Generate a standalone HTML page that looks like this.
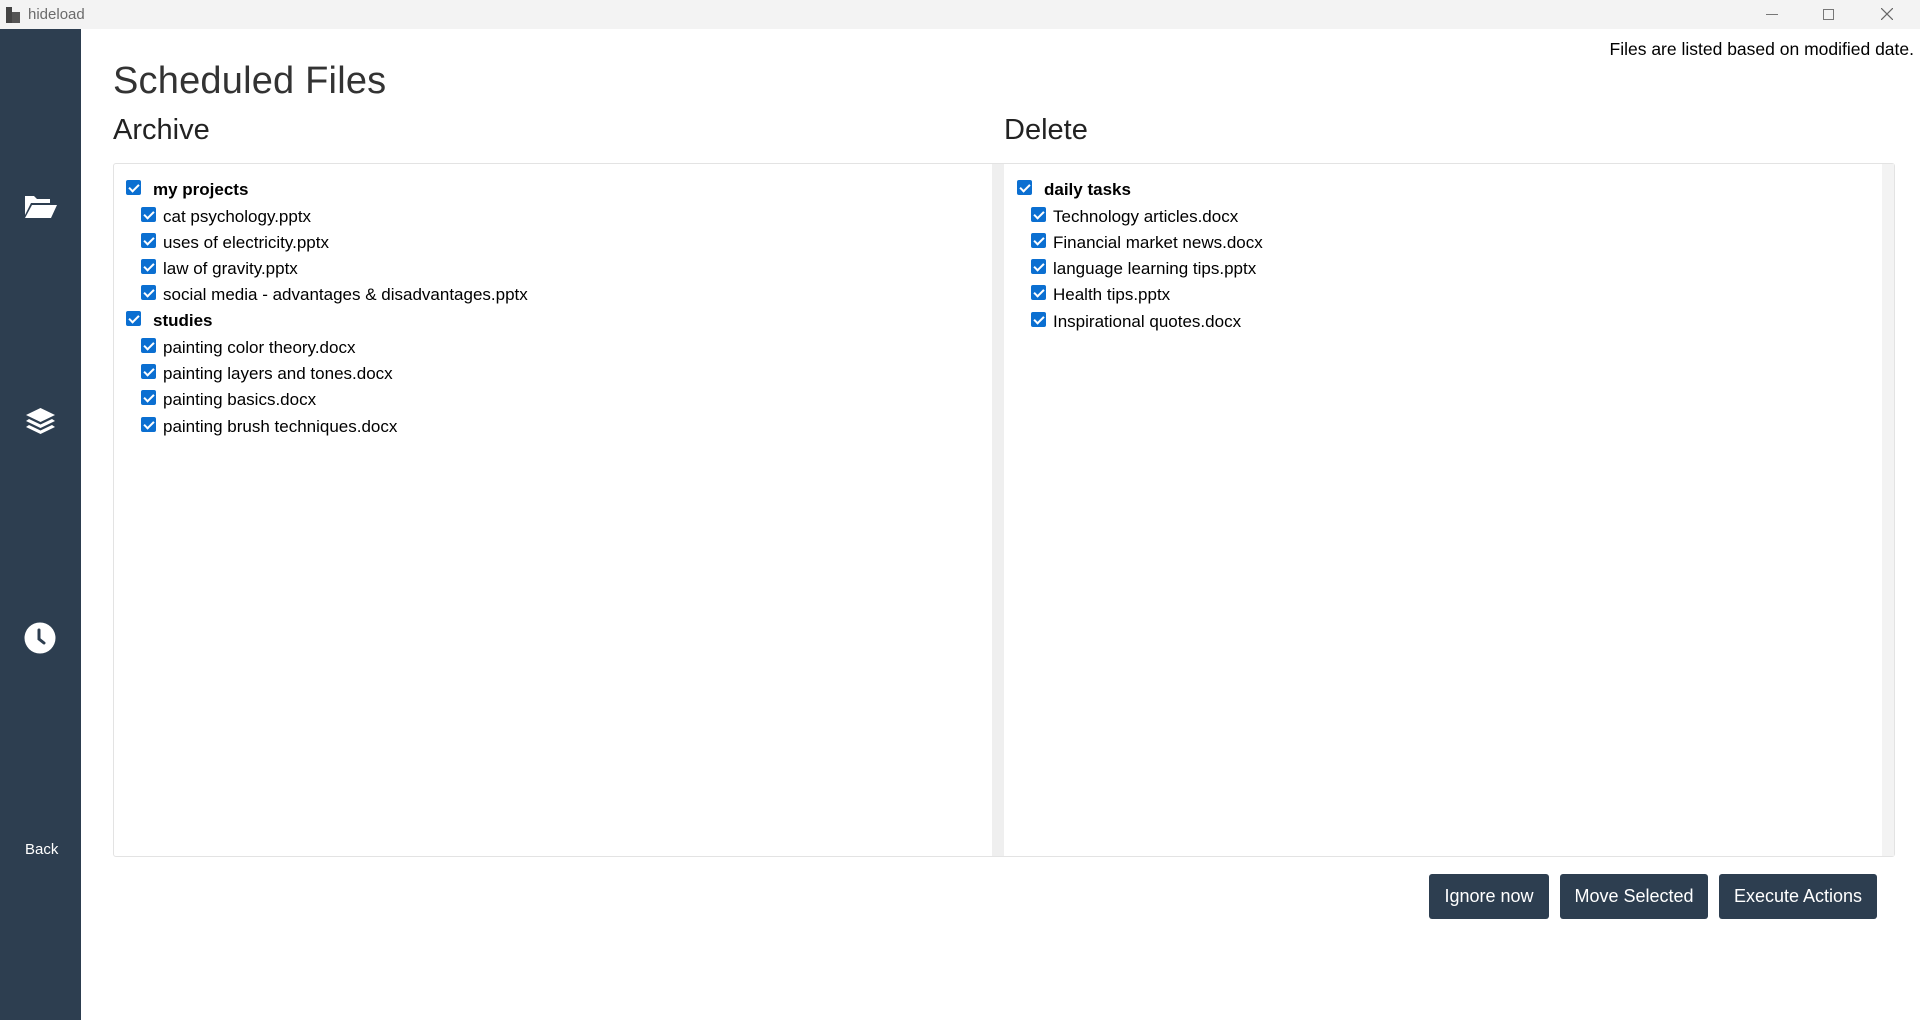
<!DOCTYPE html>
<html><head><meta charset="utf-8"><style>
*{margin:0;padding:0;box-sizing:border-box}
body{width:1920px;height:1020px;overflow:hidden;background:#fff;font-family:"Liberation Sans",sans-serif;position:relative;color:#000}
.tb{position:absolute;left:0;top:0;width:1920px;height:29px;background:#f3f3f3}
.tb .t{position:absolute;left:28px;top:6px;font-size:15px;color:#6b6b6b}
.side{position:absolute;left:0;top:29px;width:81px;height:991px;background:#2d3e50}
.abs{position:absolute}
.h1{left:113px;top:60px;font-size:38px;font-weight:normal;color:#333;letter-spacing:0.2px}
.h2{top:114px;font-size:29px;color:#222}
.panel{position:absolute;left:113px;top:163px;width:1782px;height:694px;border:1px solid #e3e3e3;border-radius:3px}
.div{position:absolute;left:992px;top:164px;width:12px;height:692px;background:#efefef}
.sb{position:absolute;left:1882px;top:164px;width:12px;height:692px;background:#f3f3f3}
.row{position:absolute;height:26px;display:flex;align-items:center;font-size:17px;white-space:nowrap}
.cb{width:15px;height:15px;background:#0b6fd1;border-radius:2px;margin-right:7px;position:relative;flex:none;margin-top:-5px}
.cb:after{content:"";position:absolute;left:5px;top:2px;width:4px;height:8px;border:solid #fff;border-width:0 2px 2px 0;transform:rotate(45deg)}
.p{font-weight:bold}
.p .cb{margin-right:12px}
.btn{position:absolute;top:874px;height:45px;background:#2d3e50;color:#fff;border-radius:3px;font-size:18px;display:flex;align-items:center;justify-content:center}
</style></head><body>
<div class="tb"><svg class="abs" style="left:6px;top:7px" width="14" height="16"><rect x="0" y="0" width="6" height="16" fill="#444"/><rect x="6" y="5" width="8" height="11" fill="#555"/></svg><span class="t">hideload</span>
<span class="abs" style="left:1766px;top:14px;width:12px;height:1px;background:#777"></span>
<span class="abs" style="left:1823px;top:9px;width:11px;height:11px;border:1px solid #777"></span>
<svg class="abs" style="left:1881px;top:8px" width="12" height="12"><path d="M0 0L12 12M12 0L0 12" stroke="#666" stroke-width="1.2"/></svg></div>
<div class="side">
<svg class="abs" style="left:24px;top:164px" width="33" height="26" viewBox="0 0 33 26"><path d="M1 3h9l3 3h13v4H7L1 22z" fill="#fff"/><path d="M8 12h25l-6 13H1z" fill="#fff"/></svg>
<svg class="abs" style="left:25px;top:378px" width="31" height="30" viewBox="0 0 31 30"><path d="M15.5 1L30 8l-14.5 7L1 8z" fill="#fff"/><path d="M4 12l11.5 5.5L27 12l3 2-14.5 7L1 14z" fill="#fff"/><path d="M4 18l11.5 5.5L27 18l3 2-14.5 7L1 20z" fill="#fff"/></svg>
<svg class="abs" style="left:24px;top:593px" width="32" height="32" viewBox="0 0 32 32"><circle cx="16" cy="16" r="15.5" fill="#fff"/><path d="M15 8v9l5 4" stroke="#2d3e50" stroke-width="3" fill="none" stroke-linecap="round"/></svg>
<span class="abs" style="left:25px;top:812px;color:#fff;font-size:15px">Back</span>
</div>
<div class="abs" style="right:6px;top:39px;font-size:17.5px">Files are listed based on modified date.</div>
<div class="abs h1">Scheduled Files</div>
<div class="abs h2" style="left:113px">Archive</div>
<div class="abs h2" style="left:1004px">Delete</div>
<div class="panel"></div><div class="div"></div><div class="sb"></div>

<div class="row p" style="left:126px;top:177px"><span class="cb"></span>my projects</div>
<div class="row" style="left:141px;top:204px"><span class="cb"></span>cat psychology.pptx</div>
<div class="row" style="left:141px;top:230px"><span class="cb"></span>uses of electricity.pptx</div>
<div class="row" style="left:141px;top:256px"><span class="cb"></span>law of gravity.pptx</div>
<div class="row" style="left:141px;top:282px"><span class="cb"></span>social media - advantages &amp; disadvantages.pptx</div>
<div class="row p" style="left:126px;top:308px"><span class="cb"></span>studies</div>
<div class="row" style="left:141px;top:335px"><span class="cb"></span>painting color theory.docx</div>
<div class="row" style="left:141px;top:361px"><span class="cb"></span>painting layers and tones.docx</div>
<div class="row" style="left:141px;top:387px"><span class="cb"></span>painting basics.docx</div>
<div class="row" style="left:141px;top:414px"><span class="cb"></span>painting brush techniques.docx</div>

<div class="row p" style="left:1017px;top:177px"><span class="cb"></span>daily tasks</div>
<div class="row" style="left:1031px;top:204px"><span class="cb"></span>Technology articles.docx</div>
<div class="row" style="left:1031px;top:230px"><span class="cb"></span>Financial market news.docx</div>
<div class="row" style="left:1031px;top:256px"><span class="cb"></span>language learning tips.pptx</div>
<div class="row" style="left:1031px;top:282px"><span class="cb"></span>Health tips.pptx</div>
<div class="row" style="left:1031px;top:309px"><span class="cb"></span>Inspirational quotes.docx</div>

<div class="btn" style="left:1429px;width:120px">Ignore now</div>
<div class="btn" style="left:1560px;width:148px">Move Selected</div>
<div class="btn" style="left:1719px;width:158px">Execute Actions</div>
</body></html>
